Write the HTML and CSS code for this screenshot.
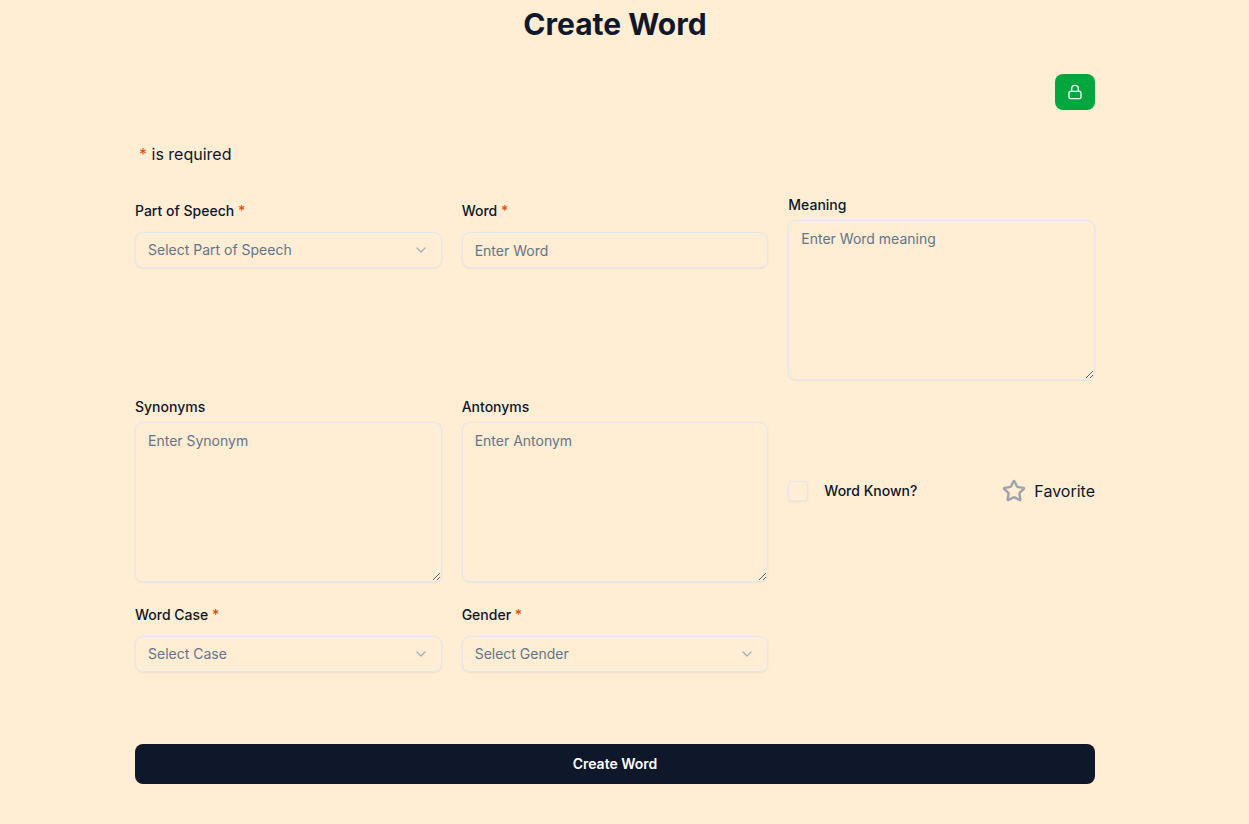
FILE: index.html
```html
<!DOCTYPE html>
<html lang="en">
<head>
<meta charset="utf-8">
<title>Create Word</title>
<link rel="stylesheet" href="styles.css">
</head>
<body>
<main class="page">
  <h1 class="title">Create Word</h1>
  <div class="toolbar">
    <button class="lock" type="button" aria-label="Lock">
      <svg width="16" height="16" viewBox="0 0 24 24" fill="none" stroke="currentColor" stroke-width="2" stroke-linecap="round" stroke-linejoin="round"><rect x="3" y="11" width="18" height="11" rx="2"/><path d="M7 11V7a5 5 0 0 1 10 0v4"/></svg>
    </button>
  </div>
  <p class="note"><span class="req">*</span> is required</p>
  <form class="grid">
    <div class="field field-select">
      <label class="label">Part of Speech <span class="req">*</span></label>
      <div class="select">Select Part of Speech
        <svg class="chev" width="16" height="16" viewBox="0 0 24 24" fill="none" stroke="currentColor" stroke-width="2" stroke-linecap="round" stroke-linejoin="round"><path d="m6 9 6 6 6-6"/></svg>
      </div>
    </div>
    <div class="field field-select">
      <label class="label">Word <span class="req">*</span></label>
      <input class="input" type="text" placeholder="Enter Word">
    </div>
    <div class="field">
      <label class="label label-area">Meaning</label>
      <textarea class="area" placeholder="Enter Word meaning"></textarea>
    </div>
    <div class="field">
      <label class="label label-area">Synonyms</label>
      <textarea class="area" placeholder="Enter Synonym"></textarea>
    </div>
    <div class="field">
      <label class="label label-area">Antonyms</label>
      <textarea class="area" placeholder="Enter Antonym"></textarea>
    </div>
    <div class="flags">
      <div class="known">
        <span class="check"></span>
        <span class="known-text">Word Known?</span>
      </div>
      <div class="fav">
        <svg width="24" height="24" viewBox="0 0 24 24" fill="none" stroke="#9ca3af" stroke-width="2.4" stroke-linecap="round" stroke-linejoin="round"><path d="M11.525 2.295a.53.53 0 0 1 .95 0l2.31 4.679a2.123 2.123 0 0 0 1.595 1.16l5.166.756a.53.53 0 0 1 .294.904l-3.736 3.638a2.123 2.123 0 0 0-.611 1.878l.882 5.14a.53.53 0 0 1-.771.56l-4.618-2.428a2.122 2.122 0 0 0-1.973 0L6.396 21.01a.53.53 0 0 1-.77-.56l.881-5.139a2.122 2.122 0 0 0-.611-1.879L2.16 9.795a.53.53 0 0 1 .294-.906l5.165-.755a2.122 2.122 0 0 0 1.597-1.16z"/></svg>
        <span>Favorite</span>
      </div>
    </div>
    <div class="field field-select">
      <label class="label">Word Case <span class="req">*</span></label>
      <div class="select">Select Case
        <svg class="chev" width="16" height="16" viewBox="0 0 24 24" fill="none" stroke="currentColor" stroke-width="2" stroke-linecap="round" stroke-linejoin="round"><path d="m6 9 6 6 6-6"/></svg>
      </div>
    </div>
    <div class="field field-select">
      <label class="label">Gender <span class="req">*</span></label>
      <div class="select">Select Gender
        <svg class="chev" width="16" height="16" viewBox="0 0 24 24" fill="none" stroke="currentColor" stroke-width="2" stroke-linecap="round" stroke-linejoin="round"><path d="m6 9 6 6 6-6"/></svg>
      </div>
    </div>
  </form>
  <button class="submit" type="button">Create Word</button>
</main>
</body>
</html>
```
FILE: styles.css
```css
* { box-sizing: border-box; }
html, body { margin: 0; padding: 0; }
body {
  background: #ffedd4;
  color: #0f172a;
  font-family: Inter, "Liberation Sans", sans-serif;
  height: 824px;
  overflow: hidden;
}
.page {
  width: 960px;
  margin-left: 135px;
}
.title {
  margin: 6px 0 0;
  font-size: 30px;
  line-height: 36px;
  font-weight: 700;
  text-align: center;
}
.toolbar {
  display: flex;
  justify-content: flex-end;
  margin-top: 32px;
}
.lock {
  width: 40px;
  height: 36px;
  border: 0;
  padding: 0;
  border-radius: 8px;
  background: #00a63e;
  color: #fff;
  display: flex;
  align-items: center;
  justify-content: center;
}
.note {
  margin: 32px 0 0 4px;
  font-size: 16px;
  line-height: 24px;
}
.req { color: #e0500c; }
.grid {
  display: grid;
  grid-template-columns: repeat(3, 1fr);
  column-gap: 20px;
  row-gap: 16px;
  margin-top: 29px;
}
.field { display: flex; flex-direction: column; min-width: 0; }
.field-select { padding-top: 6px; }
.label {
  font-size: 14px;
  line-height: 20px;
  font-weight: 500;
  margin-bottom: 11px;
}
.label-area { margin-bottom: 5px; }
.select, .input, .area {
  width: 100%;
  background: transparent;
  border: 1px solid #e2e8f0;
  border-radius: 8px;
  box-shadow: 0 1px 2px rgba(15, 23, 42, 0.06), 0 0 1px #e2e8f0;
  font: 400 14px/20px Inter, "Liberation Sans", sans-serif;
  color: #64748b;
  outline: none;
}
.select, .input {
  height: 36px;
  padding: 0 12px;
}
.select {
  display: flex;
  align-items: center;
  justify-content: space-between;
}
.chev { color: #94a3b8; opacity: .8; }
.input::placeholder, .area::placeholder { color: #64748b; opacity: 1; }
.area {
  display: block;
  height: 160px;
  margin-bottom: 1px;
  padding: 8px 12px;
  resize: vertical;
}
.flags {
  display: flex;
  align-items: center;
  justify-content: space-between;
  padding-top: 1px;
}
.known { display: flex; align-items: center; gap: 16px; }
.check {
  width: 20px;
  height: 20px;
  border: 1px solid #e2e8f0;
  border-radius: 4px;
  box-shadow: 0 1px 2px rgba(15, 23, 42, 0.06), 0 0 1px #e2e8f0;
}
.known-text { font-size: 14px; line-height: 20px; font-weight: 500; }
.fav { display: flex; align-items: center; gap: 8px; font-size: 16px; line-height: 24px; }
.submit {
  display: block;
  width: 100%;
  height: 40px;
  margin-top: 72px;
  border: 0;
  border-radius: 8px;
  background: #0f172a;
  color: #fff;
  font: 600 14px/20px Inter, "Liberation Sans", sans-serif;
}
```
